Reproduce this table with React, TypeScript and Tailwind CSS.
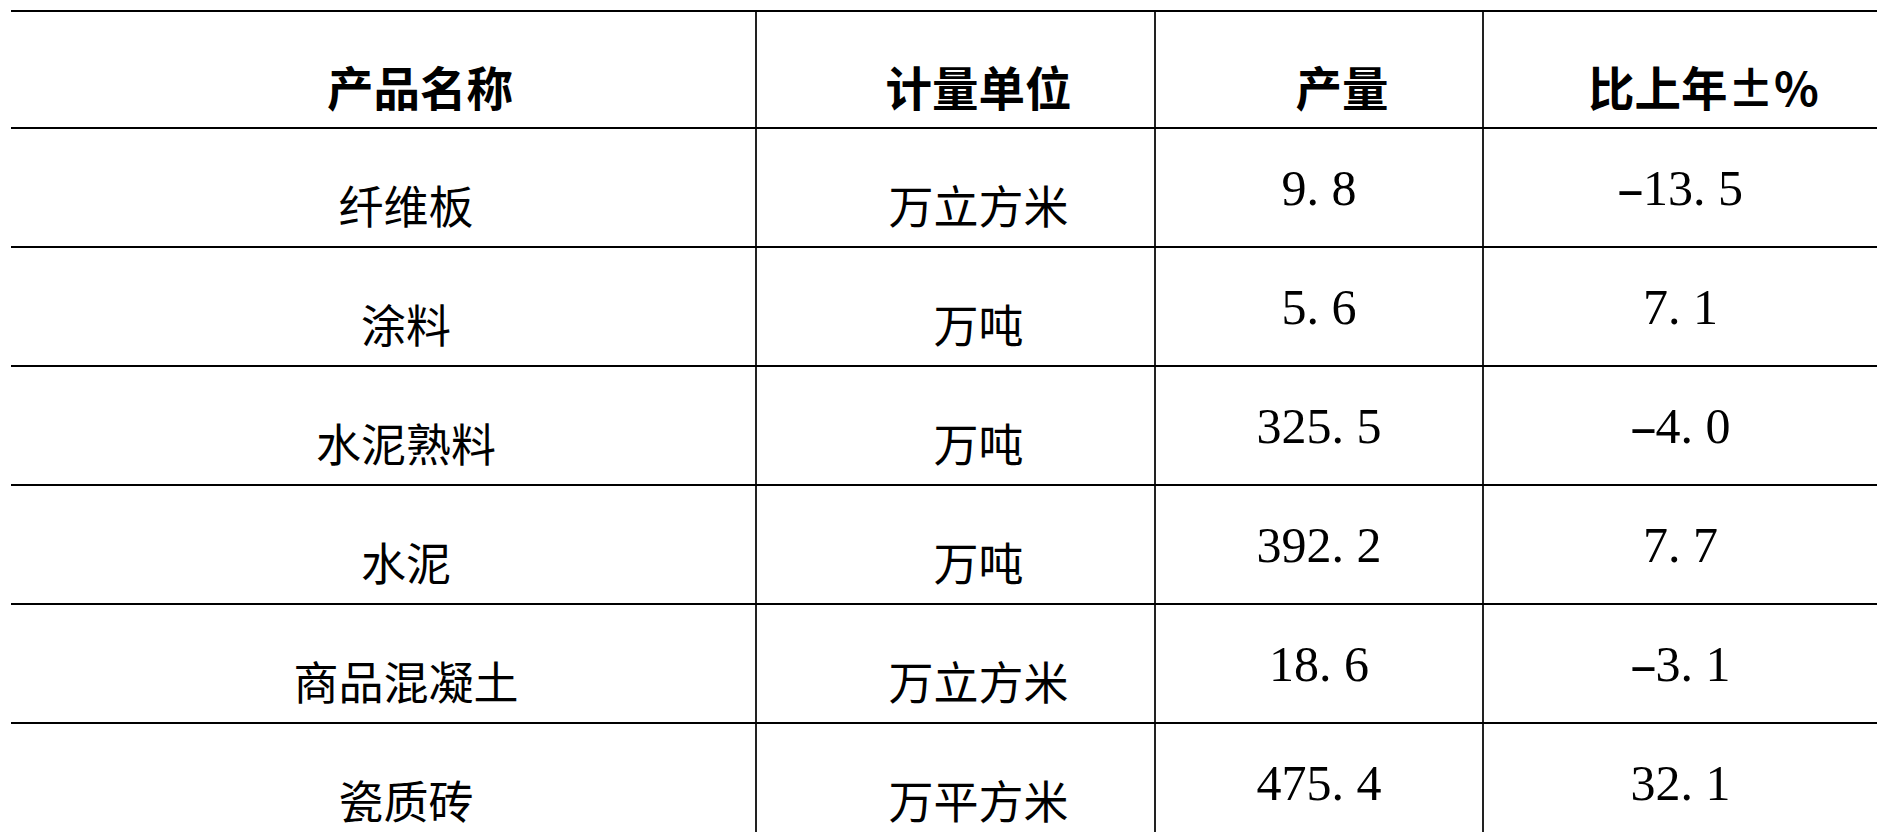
import React from "react";

const rows: [string, string, string, string][] = [
  ["纤维板", "万立方米", "9.8", "-13.5"],
  ["涂料", "万吨", "5.6", "7.1"],
  ["水泥熟料", "万吨", "325.5", "-4.0"],
  ["水泥", "万吨", "392.2", "7.7"],
  ["商品混凝土", "万立方米", "18.6", "-3.1"],
  ["瓷质砖", "万平方米", "475.4", "32.1"],
];

const gridCols = "grid grid-cols-[744px_399px_328px_395px]";

function Num({ value }: { value: string }) {
  return (
    <span className="font-['Liberation_Serif',serif] text-[50px] leading-none text-black whitespace-nowrap">
      {value.split("").map((ch, i) => (
        <span
          key={i}
          className={
            ch === "."
              ? "inline-block w-[25px] text-left"
              : ch === "-"
              ? "inline-block w-[25px] text-center scale-x-[1.7]"
              : "inline-block w-[25px] text-center"
          }
        >
          {ch}
        </span>
      ))}
    </span>
  );
}

function CnCell({
  text,
  bold,
  border,
  wide,
}: {
  text: string;
  bold?: boolean;
  border?: boolean;
  wide?: boolean;
}) {
  return (
    <div
      className={
        "flex items-center justify-center pt-[33px] " +
        (wide ? "pl-[74px] " : "pl-[46px] ") +
        (border ? "border-l-2 border-[#222]" : "")
      }
    >
      <span
        className={
          "font-['Noto_Sans_CJK_SC',sans-serif] leading-none text-black whitespace-nowrap " +
          (bold ? "font-bold text-[46.5px]" : "font-normal text-[45px]")
        }
      >
        {text}
      </span>
    </div>
  );
}

function NumCell({ value }: { value: string }) {
  return (
    <div className="flex items-center justify-center border-l-2 border-[#222]">
      <Num value={value} />
    </div>
  );
}

export default function App() {
  return (
    <div className="h-[832px] w-[1878px] overflow-hidden bg-white pt-[10px] pl-[11px]">
      <div className="w-[1866px] border-t-2 border-black">
        <div className={`${gridCols} h-[117px] border-b-2 border-black`}>
          <CnCell text="产品名称" bold wide />
          <CnCell text="计量单位" bold border />
          <CnCell text="产量" bold border />
          <CnCell text="比上年±%" bold border />
        </div>
        {rows.map((r, i) => (
          <div key={i} className={`${gridCols} h-[119px] border-b-2 border-black`}>
            <CnCell text={r[0]} />
            <CnCell text={r[1]} border />
            <NumCell value={r[2]} />
            <NumCell value={r[3]} />
          </div>
        ))}
      </div>
    </div>
  );
}
